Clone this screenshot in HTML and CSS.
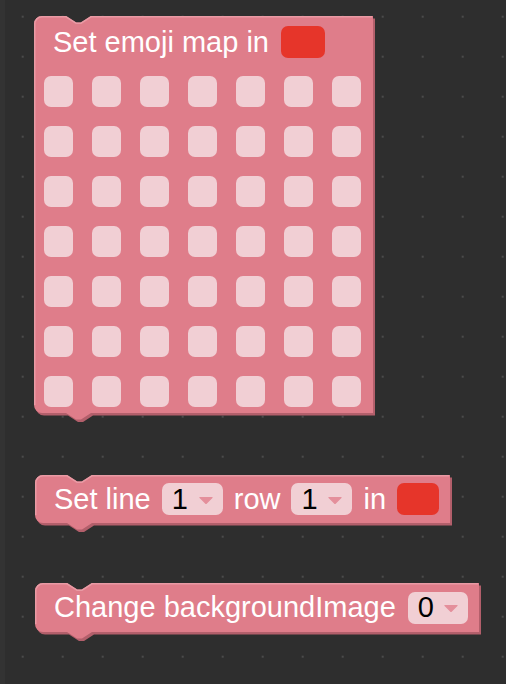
FILE: index.html
```html
<!DOCTYPE html>
<html>
<head>
<meta charset="utf-8">
<link rel="stylesheet" href="styles.css">
</head>
<body>
<div class="workspace">
  <div class="edge"></div>

  <div class="block block-emoji">
    <svg class="shape" width="343" height="410" viewBox="0 0 343 410">
      <path class="shade" transform="translate(2,2.5)" d="M0,8 A8,8 0 0 1 8,0 H32 l10,6.5 h5 l10,-6.5 H339 V397 H57 l-10,6.5 h-5 l-10,-6.5 H8 A8,8 0 0 1 0,389 Z"/>
      <path class="fill" d="M0,8 A8,8 0 0 1 8,0 H32 l10,6.5 h5 l10,-6.5 H339 V397 H57 l-10,6.5 h-5 l-10,-6.5 H8 A8,8 0 0 1 0,389 Z"/>
      <path class="hl" d="M0.75,389 V8 A7.25,7.25 0 0 1 8,0.75 H32 l10,6.5 h5 l10,-6.5 H338"/>
    </svg>
    <div class="content">
      <div class="head">
        <span class="label">Set emoji map in</span>
        <span class="swatch"></span>
      </div>
      <div class="grid">
        <span class="cell"></span><span class="cell"></span><span class="cell"></span><span class="cell"></span><span class="cell"></span><span class="cell"></span><span class="cell"></span>
        <span class="cell"></span><span class="cell"></span><span class="cell"></span><span class="cell"></span><span class="cell"></span><span class="cell"></span><span class="cell"></span>
        <span class="cell"></span><span class="cell"></span><span class="cell"></span><span class="cell"></span><span class="cell"></span><span class="cell"></span><span class="cell"></span>
        <span class="cell"></span><span class="cell"></span><span class="cell"></span><span class="cell"></span><span class="cell"></span><span class="cell"></span><span class="cell"></span>
        <span class="cell"></span><span class="cell"></span><span class="cell"></span><span class="cell"></span><span class="cell"></span><span class="cell"></span><span class="cell"></span>
        <span class="cell"></span><span class="cell"></span><span class="cell"></span><span class="cell"></span><span class="cell"></span><span class="cell"></span><span class="cell"></span>
        <span class="cell"></span><span class="cell"></span><span class="cell"></span><span class="cell"></span><span class="cell"></span><span class="cell"></span><span class="cell"></span>
      </div>
    </div>
  </div>

  <div class="block block-line">
    <svg class="shape" width="419" height="60" viewBox="0 0 419 60">
      <path class="shade" transform="translate(2,2.5)" d="M0,8 A8,8 0 0 1 8,0 H32 l10,6.5 h5 l10,-6.5 H415 V48 H57 l-10,6.5 h-5 l-10,-6.5 H8 A8,8 0 0 1 0,40 Z"/>
      <path class="fill" d="M0,8 A8,8 0 0 1 8,0 H32 l10,6.5 h5 l10,-6.5 H415 V48 H57 l-10,6.5 h-5 l-10,-6.5 H8 A8,8 0 0 1 0,40 Z"/>
      <path class="hl" d="M0.75,40 V8 A7.25,7.25 0 0 1 8,0.75 H32 l10,6.5 h5 l10,-6.5 H414"/>
    </svg>
    <div class="content row">
      <span class="label">Set line</span>
      <span class="dropdown"><span class="val">1</span><svg class="arrow" width="14" height="7" viewBox="0 0 14 7"><path d="M1,0.5 H13 L7,6.5 Z"/></svg></span>
      <span class="label">row</span>
      <span class="dropdown"><span class="val">1</span><svg class="arrow" width="14" height="7" viewBox="0 0 14 7"><path d="M1,0.5 H13 L7,6.5 Z"/></svg></span>
      <span class="label">in</span>
      <span class="swatch swatch-sm"></span>
    </div>
  </div>

  <div class="block block-bg">
    <svg class="shape" width="448" height="61" viewBox="0 0 448 61">
      <path class="shade" transform="translate(2,2.5)" d="M0,8 A8,8 0 0 1 8,0 H32 l10,6.5 h5 l10,-6.5 H444 V49 H57 l-10,6.5 h-5 l-10,-6.5 H8 A8,8 0 0 1 0,41 Z"/>
      <path class="fill" d="M0,8 A8,8 0 0 1 8,0 H32 l10,6.5 h5 l10,-6.5 H444 V49 H57 l-10,6.5 h-5 l-10,-6.5 H8 A8,8 0 0 1 0,41 Z"/>
      <path class="hl" d="M0.75,41 V8 A7.25,7.25 0 0 1 8,0.75 H32 l10,6.5 h5 l10,-6.5 H443"/>
    </svg>
    <div class="content row">
      <span class="label">Change backgroundImage</span>
      <span class="dropdown"><span class="val">0</span><svg class="arrow" width="14" height="7" viewBox="0 0 14 7"><path d="M1,0.5 H13 L7,6.5 Z"/></svg></span>
    </div>
  </div>
</div>
</body>
</html>
```

FILE: styles.css
```css
html, body {
  margin: 0;
  padding: 0;
}

body {
  width: 506px;
  height: 684px;
  overflow: hidden;
  background-color: #2e2e2e;
  background-image: radial-gradient(circle, #4b4b4b 0, #4b4b4b 0.9px, rgba(75,75,75,0) 1.4px);
  background-size: 40px 40px;
  background-position: 2.7px -3.3px;
  font-family: "Liberation Sans", Arial, Helvetica, sans-serif;
}

.workspace {
  position: relative;
  width: 506px;
  height: 684px;
}

.edge {
  position: absolute;
  left: 0;
  top: 0;
  width: 5px;
  height: 684px;
  background: #333333;
}

.block {
  position: absolute;
}

.block-emoji { left: 34px; top: 16px; width: 339px; height: 397px; }
.block-line  { left: 35px; top: 475px; width: 415px; height: 48px; }
.block-bg    { left: 35px; top: 583px; width: 444px; height: 49px; }

.shape {
  position: absolute;
  left: 0;
  top: 0;
  overflow: visible;
}

.shade { fill: #b35f6b; }
.fill  { fill: #df7d8a; }
.hl    { fill: none; stroke: #e99aa4; stroke-width: 1.5; }

.content {
  position: relative;
  box-sizing: border-box;
  height: 100%;
}

.label {
  color: #ffffff;
  font-size: 29px;
  line-height: 1;
  white-space: nowrap;
}

.head {
  display: flex;
  align-items: center;
  gap: 12px;
  padding: 10px 0 0 19px;
}

.swatch {
  display: block;
  width: 44px;
  height: 32px;
  border-radius: 7px;
  background: #e6352a;
}

.swatch-sm { width: 43px; }

.grid {
  display: grid;
  grid-template-columns: repeat(7, 28.5px);
  grid-auto-rows: 31px;
  column-gap: 19.5px;
  row-gap: 19px;
  margin-top: 18px;
  padding-left: 10px;
}

.cell {
  display: block;
  border-radius: 7px;
  background: #f1cfd4;
}

.row {
  display: flex;
  align-items: center;
  gap: 11px;
  padding: 0 11px 0 19px;
}

.block-bg .row { gap: 12px; }

.dropdown {
  display: flex;
  align-items: center;
  justify-content: space-between;
  box-sizing: border-box;
  width: 62px;
  height: 32px;
  padding: 0 10px 0 10px;
  border-radius: 7px;
  background: #f1cfd4;
}

.val {
  color: #000000;
  font-size: 29px;
  line-height: 1;
}

.arrow {
  display: block;
  margin-top: 2px;
}

.arrow path {
  fill: #e48f9b;
  stroke: #e48f9b;
  stroke-width: 1.2;
  stroke-linejoin: round;
}
```
